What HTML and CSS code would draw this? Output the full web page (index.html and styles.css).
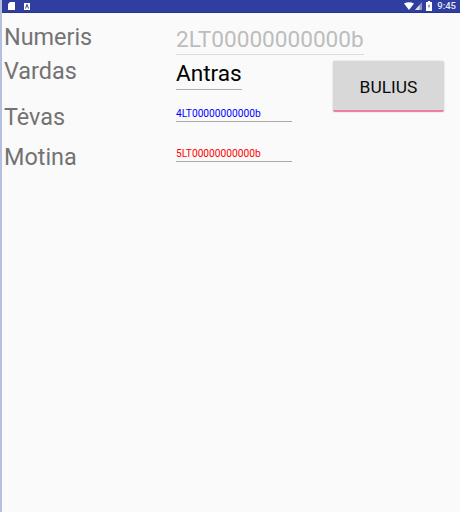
FILE: index.html
```html
<!DOCTYPE html>
<html lang="en">
<head>
    <title>Bulius</title>
    <link rel="stylesheet" href="styles.css">
</head>
<body>
    <div class="statusbar">
        <div class="status-left">
            <svg class="icon" width="7" height="8" viewBox="0 0 7 8"><path d="M2 0H7V8H0V2Z" fill="#fff"/></svg>
            <svg class="icon" width="6" height="7" viewBox="0 0 6 7"><path d="M0 0H6V7H0Z" fill="#fff"/><path d="M1.5 5.5L3 1.5L4.5 5.5" fill="none" stroke="#303f9f" stroke-width="1"/></svg>
        </div>
        <div class="status-right">
            <svg class="icon" width="10" height="8" viewBox="0 0 10 8"><path d="M0 1.5Q5 -1 10 1.5L5 8Z" fill="#fff"/></svg>
            <svg class="icon" width="7" height="8" viewBox="0 0 7 8"><path d="M7 0V8H0Z" fill="#8c95c8"/><path d="M4.5 3V8H0Z" fill="#fff" opacity="0.7"/></svg>
            <svg class="icon battery" width="6" height="10" viewBox="0 0 6 10"><path d="M2 0H4V1H6V10H0V1H2Z" fill="#fff"/><path d="M3.4 2.5L2 5.5H3L2.6 7.8L4 4.6H3Z" fill="#303f9f"/></svg>
            <span class="clock">9:45</span>
        </div>
    </div>

    <div class="form">
        <div class="label row1">Numeris</div>
        <div class="field big row1"><span class="hint">2LT00000000000b</span></div>

        <div class="label row2">Vardas</div>
        <div class="field name row2"><span>Antras</span></div>

        <button class="bulius">BULIUS</button>

        <div class="label row3">Tėvas</div>
        <div class="field small blue row3"><span>4LT00000000000b</span></div>

        <div class="label row4">Motina</div>
        <div class="field small red row4"><span>5LT00000000000b</span></div>
    </div>
</body>
</html>
```

FILE: styles.css
```css
html, body {
    height: 100%;
}

body {
    margin: 0;
    background-color: #fafafa;
    font-family: Roboto, sans-serif;
    border-left: 2px solid #b4c0de;
    overflow: hidden;
}

.statusbar {
    display: flex;
    justify-content: space-between;
    align-items: center;
    height: 12px;
    margin-left: -2px;
    padding: 0 4px 0 8px;
    background-color: #303f9f;
    border-bottom: 1px solid #27348b;
}

.status-left {
    display: flex;
    align-items: center;
    gap: 9px;
}

.status-right {
    display: flex;
    align-items: center;
    gap: 1px;
}

.icon {
    display: block;
}

.battery {
    margin: 0 4px 0 3px;
}

.clock {
    font-size: 9.5px;
    font-weight: 500;
    color: #e6e8f4;
    line-height: 12px;
}

.form {
    display: grid;
    grid-template-columns: 174px 157px 111px;
    grid-template-rows: 42px 35px 32px 40px;
}

.label {
    grid-column: 1;
    padding-left: 2px;
    font-size: 23.4px;
    line-height: 28px;
    color: #737373;
}

.row1 {
    grid-row: 1;
}

.row2 {
    grid-row: 2;
}

.row3 {
    grid-row: 3;
}

.row4 {
    grid-row: 4;
}

.label.row1 {
    padding-top: 10px;
}

.label.row2 {
    padding-top: 2px;
}

.label.row3 {
    padding-top: 13px;
}

.label.row4 {
    padding-top: 21px;
}

.field {
    grid-column: 2;
    display: flex;
    align-items: flex-end;
}

.field span {
    display: block;
    white-space: nowrap;
}

.big {
    grid-column: 2 / 4;
    width: 188px;
    font-size: 22.6px;
    line-height: 28px;
    border-bottom: 1px solid #dcdcdc;
    box-sizing: border-box;
    height: 42px;
}

.hint {
    color: #bdbdbd;
}

.name {
    width: 66px;
    font-size: 22.6px;
    line-height: 28px;
    color: #000;
    border-bottom: 1px solid #b0b0b0;
    box-sizing: border-box;
}

.name span {
    padding-bottom: 1px;
}

.small {
    width: 116px;
    font-size: 10.2px;
    line-height: 14px;
    border-bottom: 1px solid #a8a8a8;
    box-sizing: border-box;
}

.blue {
    color: #0000ff;
}

.red {
    color: #ff0000;
}

.bulius {
    grid-column: 3;
    grid-row: 2 / 4;
    align-self: start;
    height: 51px;
    margin: 6px 0 0;
    padding: 3px 0 0;
    border: none;
    border-bottom: 2px solid #ee7f9f;
    border-radius: 2px;
    background-color: #d8d8d8;
    box-shadow: 0 0 2px rgba(0, 0, 0, 0.2);
    font-family: Roboto, sans-serif;
    font-size: 17.4px;
    color: #0a0a0a;
}
```
